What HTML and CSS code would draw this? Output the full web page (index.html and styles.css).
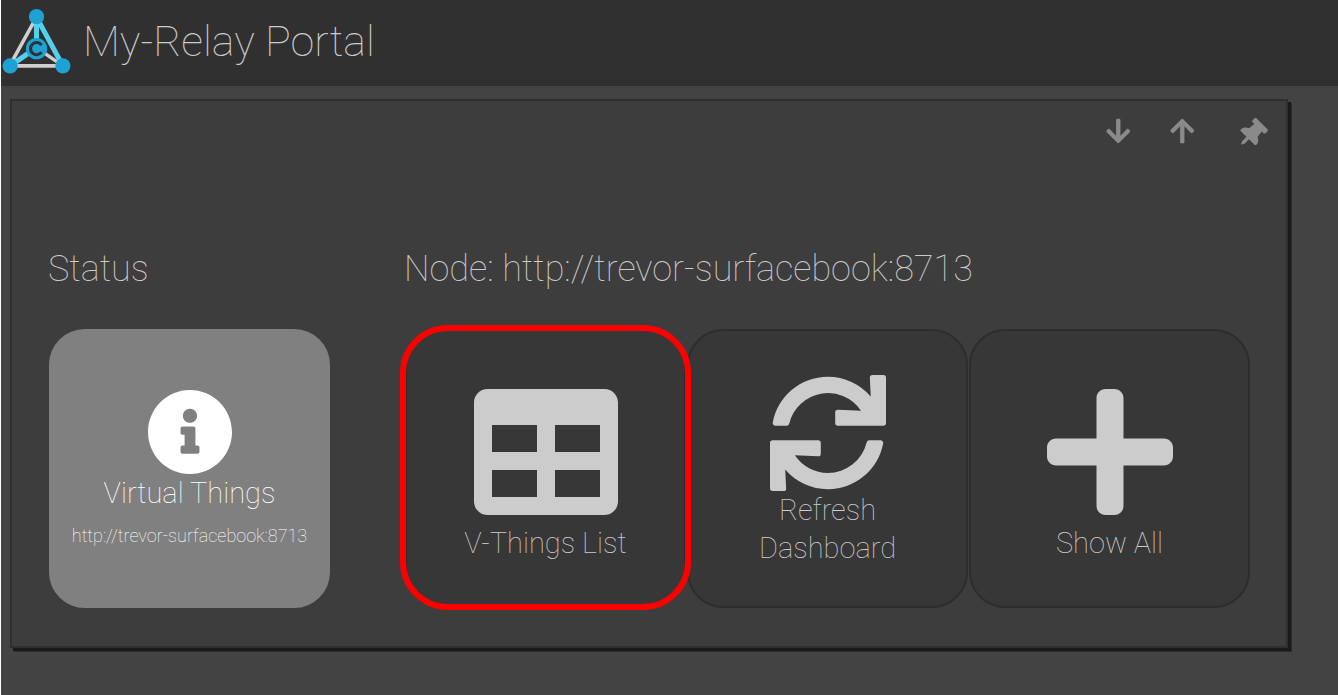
FILE: index.html
```html
<!DOCTYPE html>
<html lang="en">
<head>
<meta charset="utf-8">
<title>My-Relay Portal</title>
<link rel="stylesheet" href="styles.css">
</head>
<body>
<div class="page">
  <header class="header">
    <svg class="logo" viewBox="0 0 68 64" aria-hidden="true">
      <g fill="none">
        <path d="M34 8 8 55M8 56H60M34 38 60 56" stroke="#cfcfcf" stroke-width="3.5"/>
        <path d="M34 8 60 56M34 8V38L8 56" stroke="#54cfec" stroke-width="5"/>
      </g>
      <g fill="#1ea2d3">
        <circle cx="34" cy="7.500" r="7.500"/>
        <circle cx="8" cy="56" r="7.500"/>
        <circle cx="60" cy="56" r="7.500"/>
        <circle cx="34" cy="39" r="10.500"/>
      </g>
      <path d="M39 35.500A6 6 0 1 0 39 42.500" fill="none" stroke="#2b3338" stroke-width="3"/>
    </svg>
    <h1 class="title">My-Relay Portal</h1>
  </header>

  <main class="panel">
    <div class="toolbar">
      <button class="tool" type="button" aria-label="Move down">
        <svg viewBox="0 0 448 512"><path d="M413.100 222.500l22.200 22.200c9.400 9.400 9.400 24.600 0 33.900L241 473c-9.400 9.400-24.600 9.400-33.900 0L12.700 278.600c-9.400-9.400-9.400-24.600 0-33.900l22.200-22.200c9.500-9.500 25-9.300 34.300.4L184 343.400V56c0-13.300 10.700-24 24-24h32c13.300 0 24 10.700 24 24v287.400l114.800-120.500c9.300-9.800 24.800-10 34.300-.4z"/></svg>
      </button>
      <button class="tool" type="button" aria-label="Move up">
        <svg viewBox="0 0 448 512"><path d="M34.900 289.500l-22.200-22.200c-9.400-9.400-9.400-24.600 0-33.900L207 39c9.400-9.400 24.600-9.400 33.900 0l194.300 194.300c9.400 9.400 9.400 24.600 0 33.900L413 289.400c-9.500 9.500-25 9.300-34.300-.4L264 168.600V456c0 13.300-10.700 24-24 24h-32c-13.300 0-24-10.700-24-24V168.600L69.200 289.100c-9.300 9.800-24.800 10-34.300.4z"/></svg>
      </button>
      <button class="tool tool-pin" type="button" aria-label="Pin">
        <svg viewBox="-11 -44 490 490"><path transform="rotate(45 192 256)" d="M298.028 214.267L285.793 96H328c13.255 0 24-10.745 24-24V24c0-13.255-10.745-24-24-24H56C42.745 0 32 10.745 32 24v48c0 13.255 10.745 24 24 24h42.207L85.972 214.267C37.465 236.820 0 277.261 0 328c0 13.255 10.745 24 24 24h136v104.007c0 1.242.289 2.467.845 3.578l24 48c2.941 5.882 11.364 5.893 14.311 0l24-48a8.008 8.008 0 0 0 .845-3.578V352h136c13.255 0 24-10.745 24-24-.001-51.183-37.983-91.420-85.973-113.733z"/></svg>
      </button>
    </div>

    <div class="groups">
      <section class="group">
        <h2 class="heading">Status</h2>
        <div class="tiles">
          <button class="tile tile-status" type="button">
            <svg class="icon-info" viewBox="8 8 496 496" aria-hidden="true"><path d="M256 8C119.043 8 8 119.083 8 256c0 136.997 111.043 248 248 248s248-111.003 248-248C504 119.083 392.957 8 256 8zm0 110c23.196 0 42 18.804 42 42s-18.804 42-42 42-42-18.804-42-42 18.804-42 42-42zm56 254c0 6.627-5.373 12-12 12h-88c-6.627 0-12-5.373-12-12v-24c0-6.627 5.373-12 12-12h12v-64h-12c-6.627 0-12-5.373-12-12v-24c0-6.627 5.373-12 12-12h64c6.627 0 12 5.373 12 12v100h12c6.627 0 12 5.373 12 12v24z"/></svg>
            <span class="label">Virtual Things</span>
            <span class="detail">http://trevor-surfacebook:8713</span>
          </button>
        </div>
      </section>

      <section class="group">
        <h2 class="heading">Node: http://trevor-surfacebook:8713</h2>
        <div class="tiles">
          <button class="tile tile-marked" type="button">
            <svg class="icon-large" viewBox="0 0 512 512" aria-hidden="true"><path d="M464 32H48C21.490 32 0 53.490 0 80v352c0 26.510 21.490 48 48 48h416c26.510 0 48-21.490 48-48V80c0-26.510-21.490-48-48-48zM224 416H64v-96h160v96zm0-160H64v-96h160v96zm224 160H288v-96h160v96zm0-160H288v-96h160v96z"/></svg>
            <span class="label">V-Things List</span>
          </button>
          <button class="tile" type="button">
            <svg class="icon-refresh" viewBox="0 0 512 512" aria-hidden="true"><path d="M440.650 12.570l4 82.770A247.160 247.160 0 0 0 255.830 8C134.730 8 33.910 94.920 12.290 209.820A12 12 0 0 0 24.090 224h49.050a12 12 0 0 0 11.670-9.260 175.910 175.910 0 0 1 317-56.940l-101.460-4.860a12 12 0 0 0-12.570 12v47.410a12 12 0 0 0 12 12H500a12 12 0 0 0 12-12V12a12 12 0 0 0-12-12h-47.370a12 12 0 0 0-11.980 12.570zM255.830 432a175.610 175.610 0 0 1-146-77.800l101.800 4.870a12 12 0 0 0 12.570-12v-47.400a12 12 0 0 0-12-12H12a12 12 0 0 0-12 12V500a12 12 0 0 0 12 12h47.350a12 12 0 0 0 12-12.600l-4.150-82.570A247.170 247.170 0 0 0 255.830 504c121.110 0 221.930-86.920 243.550-201.820a12 12 0 0 0-11.800-14.180h-49.050a12 12 0 0 0-11.670 9.260A175.860 175.860 0 0 1 255.830 432z"/></svg>
            <span class="label">Refresh Dashboard</span>
          </button>
          <button class="tile" type="button">
            <svg class="icon-large" viewBox="-32 0 512 512" aria-hidden="true"><path d="M416 208H272V64c0-17.670-14.330-32-32-32h-32c-17.670 0-32 14.330-32 32v144H32c-17.670 0-32 14.330-32 32v32c0 17.670 14.330 32 32 32h144v144c0 17.670 14.330 32 32 32h32c17.670 0 32-14.330 32-32V304h144c17.670 0 32-14.330 32-32v-32c0-17.670-14.330-32-32-32z"/></svg>
            <span class="label">Show All</span>
          </button>
        </div>
      </section>
    </div>
  </main>
</div>
</body>
</html>
```

FILE: styles.css
```css
* {
  box-sizing: border-box;
}

body {
  margin: 0;
  padding-left: 1px;
  background: #fff;
  color: #ccc;
  font-family: Roboto, "Open Sans", sans-serif;
  font-weight: 100;
}

button {
  padding: 0;
  border: 0;
  background: none;
  color: inherit;
  font: inherit;
  cursor: pointer;
}

svg {
  display: block;
  fill: currentColor;
}

.page {
  min-height: 100vh;
  background: #434343;
}

.header {
  display: flex;
  align-items: center;
  gap: 12px;
  padding: 8px 1px 12px;
  background: #303030;
}

.logo {
  width: 69px;
  height: 65px;
}

.title {
  margin: 0;
  font-size: 43px;
  line-height: 66px;
  font-weight: 100;
}

.panel {
  margin: 13px 50px 0 9px;
  padding: 16px 12px 37px 36px;
  border: 2px solid #2f2f2f;
  background: #3d3d3d;
  box-shadow: 3px 3px 0 #1a1a1a, 4px 4px 0 #2c2c2c;
}

.toolbar {
  display: flex;
  justify-content: flex-end;
  gap: 24px;
  color: #8a8a8a;
}

.tool {
  display: flex;
  justify-content: center;
  width: 40px;
}

.tool svg {
  height: 28px;
}

.tool-pin {
  margin-left: 8px;
}

.groups {
  display: flex;
  gap: 74px;
  margin-top: 103px;
}

.heading {
  margin: 0 0 38px;
  font-size: 36px;
  line-height: 42px;
  font-weight: 100;
}

.tiles {
  display: flex;
}

.tile {
  position: relative;
  display: flex;
  flex-direction: column;
  align-items: center;
  justify-content: center;
  width: 281px;
  height: 279px;
  margin: 1px 0 1px 1px;
  padding: 4px 40px 0;
  border: 2px solid #2d2d2d;
  border-radius: 36px;
  background: #373737;
}

.tile-status {
  padding: 2px 8px 0;
  border-color: #808080;
  background: #808080;
  color: #fff;
}

.tile-marked {
  z-index: 1;
}

.tile-marked::after {
  content: "";
  position: absolute;
  inset: -6px -7px -4px;
  border: 6px solid #f00;
  border-radius: 48px;
}

.icon-large {
  width: 144px;
  height: 144px;
}

.icon-refresh {
  width: 116px;
  height: 116px;
}

.icon-info {
  width: 84px;
  height: 84px;
}

.label {
  font-size: 29px;
  line-height: 38px;
}

.detail {
  margin-top: 10px;
  font-size: 18px;
  line-height: 28px;
}
```
